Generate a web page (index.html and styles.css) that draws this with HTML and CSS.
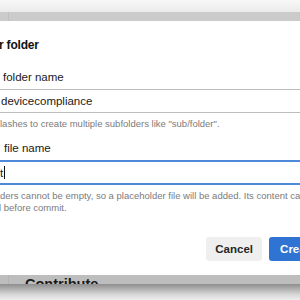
FILE: index.html
```html
<!DOCTYPE html>
<html lang="en">
<head>
<meta charset="utf-8">
<title>New folder</title>
<link rel="stylesheet" href="styles.css">
</head>
<body>
<div class="screen">
  <div class="page-top"></div>
  <div class="page-band"></div>
  <div class="dialog">
    <h2 class="title">r folder</h2>
    <label class="label label-folder">folder name</label>
    <div class="field">devicecompliance</div>
    <p class="help">lashes to create multiple subfolders like "sub/folder".</p>
    <label class="label label-file">file name</label>
    <div class="field field-focus"><span class="typed">t</span><span class="caret"></span></div>
    <p class="help help-line">ders cannot be empty, so a placeholder file will be added. Its content can</p>
    <p class="help help-line help-last">l before commit.</p>
    <div class="actions">
      <button class="btn btn-cancel">Cancel</button>
      <button class="btn btn-primary">Create</button>
    </div>
  </div>
  <div class="page-bottom">
    <div class="contribute">Contribute</div>
  </div>
  <div class="page-shadow"></div>
</div>
</body>
</html>
```

FILE: styles.css
```css
* { box-sizing: border-box; }

html, body {
  margin: 0;
  padding: 0;
  width: 300px;
  height: 300px;
  overflow: hidden;
  background: #ffffff;
}

.screen {
  width: 300px;
  height: 300px;
  overflow: hidden;
  font-family: "Liberation Sans", Arial, sans-serif;
  color: #1c1c1c;
}

.page-top {
  height: 12px;
  background: linear-gradient(#f8f8f8, #ebebeb);
}

.page-band {
  height: 9px;
  background: linear-gradient(to right, #cbcbcb 8px, #bfbfbf 8px, #bfbfbf 9px, #cbcbcb 9px);
}

.dialog {
  width: 345px;
  height: 254px;
  background: #ffffff;
  padding: 16px 18px 0 0;
  display: flex;
  flex-direction: column;
}

.title {
  margin: 0;
  font-size: 12px;
  line-height: 16px;
  font-weight: 700;
  color: #111111;
  letter-spacing: -0.2px;
  text-indent: -1px;
}

.label {
  display: block;
  font-size: 11.5px;
  line-height: 16px;
  color: #1a1a1a;
}

.label-folder {
  margin-top: 16px;
  padding-left: 3px;
}

.label-file {
  margin-top: 10px;
  padding-left: 4px;
}

.field {
  margin-top: 4px;
  height: 24px;
  border-top: 1px solid #bdbdbd;
  border-bottom: 1px solid #bdbdbd;
  border-right: 1px solid #bdbdbd;
  font-size: 11.5px;
  line-height: 22px;
  padding-left: 1px;
  color: #1a1a1a;
  white-space: nowrap;
  display: flex;
  align-items: center;
}

.field-focus {
  height: 25px;
  border: 2px solid #4f89d9;
  border-left: none;
  padding-left: 0;
}

.typed {
  margin-left: 0;
}

.caret {
  display: inline-block;
  width: 1px;
  height: 13px;
  margin-left: 1px;
  background: #111111;
}

.help {
  margin: 5px 0 0 0;
  font-size: 9.5px;
  line-height: 12px;
  color: #7b7b7b;
  white-space: nowrap;
}

.help-line {
  line-height: 11.5px;
}

.help-line + .help-line {
  margin-top: 0;
}

.help-last {
  text-indent: -1px;
}

.actions {
  margin-top: auto;
  margin-bottom: 14px;
  display: flex;
  justify-content: flex-end;
  gap: 7px;
}

.btn {
  height: 24px;
  border: none;
  border-radius: 3px;
  font-family: "Liberation Sans", Arial, sans-serif;
  font-size: 11.5px;
  font-weight: 700;
  padding: 0 9px;
}

.btn-cancel {
  background: #efefef;
  color: #262626;
}

.btn-primary {
  background: #2f74d3;
  color: #ffffff;
  width: 58px;
}

.page-bottom {
  height: 9px;
  overflow: hidden;
  background: linear-gradient(to right, #bdbdbd 8px, #b2b2b2 8px, #b2b2b2 9px, #bdbdbd 9px);
  padding: 2px 0 0 25px;
}

.contribute {
  font-size: 14.5px;
  line-height: 14px;
  font-weight: 700;
  color: #1a1a1a;
}

.page-shadow {
  height: 16px;
  background: linear-gradient(#8e8e8e, #a9a9a9 25%, #d6d6d6 65%, #eeeeee);
}
```
